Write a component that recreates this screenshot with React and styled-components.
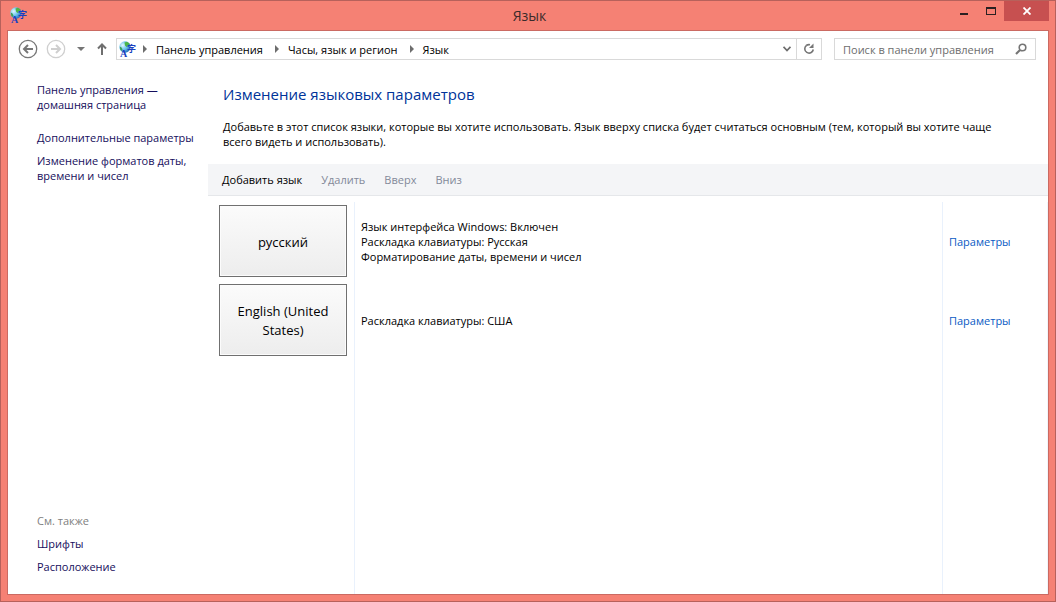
import React from "react";
import styled, { createGlobalStyle } from "styled-components";

const GlobalStyle = createGlobalStyle`
  *, *::before, *::after { box-sizing: border-box; }
  body {
    margin: 0;
    font-family: "Open Sans", "Noto Sans", sans-serif;
    font-size: 11px;
    line-height: 15px;
    color: #000;
  }
  h1, h2, p, ul, ol { margin: 0; padding: 0; font-weight: 400; }
  ul, ol { list-style: none; }
  button, input { font: inherit; }
  button { border: 0; padding: 0; background: none; color: inherit; }
  a { text-decoration: none; }
  svg { display: block; flex: none; }
`;

const Window = styled.div`
  min-height: 100vh;
  display: flex;
  flex-direction: column;
  background: #f58174;
  border: 1px solid #b7615b;
  padding: 0 6px 6px;
`;

const TitleBar = styled.header`
  height: 29px;
  display: grid;
  grid-template-columns: 1fr auto 1fr;
  padding-left: 3px;
`;

const TitleIcon = styled.div`
  padding-top: 6px;
`;

const Title = styled.h1`
  font-size: 14px;
  line-height: 30px;
  color: #3a2b2b;
`;

const Controls = styled.div`
  display: flex;
  justify-content: flex-end;
  align-items: flex-start;
`;

const ControlButton = styled.button`
  width: ${(p) => (p.$close ? 45 : 27)}px;
  height: 20px;
  display: flex;
  align-items: center;
  justify-content: center;
  background: ${(p) => (p.$close ? "#c75050" : "transparent")};
`;

const Client = styled.div`
  flex: 1;
  display: flex;
  flex-direction: column;
  background: #fff;
  border: 1px solid #cb6a62;
`;

const NavBar = styled.nav`
  display: flex;
  align-items: center;
  padding: 7px 12px 0 9px;
`;

const NavButton = styled.button`
  width: ${(p) => p.$width}px;
  height: 22px;
  display: flex;
  align-items: center;
  justify-content: center;
`;

const AddressBar = styled.div`
  flex: 1;
  height: 22px;
  display: flex;
  align-items: center;
  border: 1px solid #d9d9d9;
  padding-left: 2px;
  margin-right: 12px;
`;

const Crumbs = styled.ol`
  flex: 1;
  display: flex;
  align-items: center;
`;

const Crumb = styled.li`
  display: flex;
  align-items: center;
  gap: 9px;
  padding-left: 12px;
  &:first-child { padding-left: 6px; }
`;

const CrumbLink = styled.a`
  color: #000;
  white-space: nowrap;
`;

const RefreshButton = styled.button`
  width: 25px;
  height: 20px;
  display: flex;
  align-items: center;
  justify-content: center;
  border-left: 1px solid #d9d9d9;
`;

const SearchBox = styled.form`
  width: 202px;
  height: 22px;
  display: flex;
  align-items: center;
  border: 1px solid #d9d9d9;
  padding: 0 8px;
`;

const SearchInput = styled.input`
  flex: 1;
  min-width: 0;
  border: 0;
  outline: 0;
  padding: 0;
  background: transparent;
  &::placeholder { color: #6d6d6d; opacity: 1; }
`;

const Content = styled.div`
  flex: 1;
  display: flex;
`;

const Sidebar = styled.aside`
  width: 200px;
  flex: none;
  display: flex;
  flex-direction: column;
  justify-content: space-between;
  padding: 22px 4px 20px 29px;
`;

const SideGroup = styled.div`
  display: flex;
  flex-direction: column;
  align-items: flex-start;
  gap: 8px;
`;

const SideLink = styled.a`
  color: #150e5c;
  margin-bottom: ${(p) => (p.$home ? 10 : 0)}px;
`;

const SideCaption = styled.h2`
  font-size: 11px;
  line-height: 15px;
  color: #808080;
`;

const Main = styled.main`
  flex: 1;
  min-width: 0;
  display: flex;
  flex-direction: column;
`;

const Intro = styled.section`
  padding: 23px 40px 15px 15px;
`;

const Heading = styled.h2`
  font-size: 15px;
  line-height: 22px;
  color: #003399;
  margin-bottom: 14px;
`;

const Toolbar = styled.div`
  height: 32px;
  display: flex;
  align-items: center;
  gap: 19px;
  padding-left: 14px;
  background: #f4f5f7;
  border-bottom: 1px solid #e5e7ea;
`;

const ToolButton = styled.button`
  &:disabled { color: #838999; }
`;

const LanguageList = styled.ul`
  flex: 1;
  display: flex;
  flex-direction: column;
  margin-top: 6px;
  border-right: 1px solid #f0f4fa;
`;

const LanguageRow = styled.li`
  display: grid;
  grid-template-columns: 146px 1fr 105px;
  min-height: ${(p) => (p.$rest ? 0 : 79)}px;
  flex: ${(p) => (p.$rest ? "1" : "none")};
`;

const TileCell = styled.div`
  padding: 3px 7px 4px 11px;
`;

const Cell = styled.div`
  display: flex;
  flex-direction: column;
  justify-content: center;
  padding-left: 6px;
  border-left: 1px solid #e9f1fc;
`;

const LanguageTile = styled.button`
  width: 128px;
  height: 72px;
  padding: 2px 10px 0;
  font-size: 13px;
  line-height: 19px;
  border: 1px solid #707070;
  background: linear-gradient(#fbfbfb, #ededed);
  box-shadow: inset 0 0 0 1px #fcfcfc;
`;

const OptionsLink = styled.a`
  color: #0a5bc4;
`;

const IconGlyph = styled.text`
  font-family: ${(p) => (p.$cjk ? '"Noto Sans CJK SC"' : '"Liberation Serif"')}, sans-serif;
  font-size: ${(p) => (p.$cjk ? 9 : 10)}px;
  font-weight: 700;
  fill: #1a3fc0;
`;

function LanguageIcon() {
  return (
    <svg width="18" height="17" viewBox="0 0 18 17" aria-hidden="true">
      <defs>
        <radialGradient id="ocean" cx="0.3" cy="0.35" r="0.75">
          <stop offset="0" stopColor="#e2f8ff" />
          <stop offset="0.5" stopColor="#6cc4ee" />
          <stop offset="1" stopColor="#1e64b4" />
        </radialGradient>
      </defs>
      <circle cx="6" cy="6" r="5.700" fill="url(#ocean)" />
      <path d="M5.500 1.500 8 .8l2.500 1.800L9.500 5 7.500 6 6 4.500z" fill="#4cb648" />
      <path d="M.8 5.500 2.500 6.500 3.500 8.500 2.500 10 1.200 8.500z" fill="#3c9f58" />
      <IconGlyph $cjk x="8" y="11">字</IconGlyph>
      <IconGlyph x="1" y="16">A</IconGlyph>
    </svg>
  );
}

function RoundArrow({ color, flip }) {
  return (
    <svg width="20" height="20" viewBox="0 0 20 20" fill="none" stroke={color} aria-hidden="true">
      <circle cx="10" cy="10" r="8.700" strokeWidth="1.300" />
      <path
        d={flip ? "M5 10h9M10 6l4 4-4 4" : "M15 10H6M10 6l-4 4 4 4"}
        strokeWidth="2"
      />
    </svg>
  );
}

function CrumbArrow() {
  return (
    <svg width="4" height="8" viewBox="0 0 4 8" aria-hidden="true">
      <path d="M0 0l4 4-4 4z" fill="#6d6d6d" />
    </svg>
  );
}

const crumbs = ["Панель управления", "Часы, язык и регион", "Язык"];

const tools = [
  { label: "Добавить язык", enabled: true },
  { label: "Удалить" },
  { label: "Вверх" },
  { label: "Вниз" },
];

const languages = [
  {
    name: "русский",
    details: [
      "Язык интерфейса Windows: Включен",
      "Раскладка клавиатуры: Русская",
      "Форматирование даты, времени и чисел",
    ],
  },
  { name: "English (United States)", details: ["Раскладка клавиатуры: США"] },
];

export default function App() {
  return (
    <>
      <GlobalStyle />
      <Window>
        <TitleBar>
          <TitleIcon><LanguageIcon /></TitleIcon>
          <Title>Язык</Title>
          <Controls>
            <ControlButton aria-label="Свернуть">
              <svg width="8" height="20" viewBox="0 0 8 20"><path d="M0 12h8v2H0z" fill="#2a2022" /></svg>
            </ControlButton>
            <ControlButton aria-label="Развернуть">
              <svg width="10" height="20" viewBox="0 0 10 20"><path d="M0 6h10v8H0zM1 8v5h8V8z" fillRule="evenodd" fill="#2a2022" /></svg>
            </ControlButton>
            <ControlButton $close aria-label="Закрыть">
              <svg width="8" height="8" viewBox="0 0 8 8"><path d="M.5.5l7 7M7.500.5l-7 7" stroke="#fff" strokeWidth="1.800" /></svg>
            </ControlButton>
          </Controls>
        </TitleBar>
        <Client>
          <NavBar>
            <NavButton $width={21} aria-label="Назад"><RoundArrow color="#777" /></NavButton>
            <NavButton $width={36} aria-label="Вперед"><RoundArrow color="#cfcfcf" flip /></NavButton>
            <NavButton $width={14} aria-label="Последние расположения">
              <svg width="8" height="4" viewBox="0 0 8 4"><path d="M0 0h8L4 4z" fill="#757575" /></svg>
            </NavButton>
            <NavButton $width={28} aria-label="Вверх на один уровень">
              <svg width="10" height="12" viewBox="0 0 10 12" fill="none" stroke="#6f6f6f" strokeWidth="2">
                <path d="M5 12V1.500M1 5.500l4-4 4 4" />
              </svg>
            </NavButton>
            <AddressBar>
              <LanguageIcon />
              <Crumbs>
                {crumbs.map((c) => (
                  <Crumb key={c}><CrumbArrow /><CrumbLink href="#">{c}</CrumbLink></Crumb>
                ))}
              </Crumbs>
              <NavButton $width={19} aria-label="Предыдущие расположения">
                <svg width="8" height="6" viewBox="0 0 8 6"><path d="M.5.8 4 4.500 7.500.8" fill="none" stroke="#6d6d6d" strokeWidth="1.800" /></svg>
              </NavButton>
              <RefreshButton aria-label="Обновить">
                <svg width="12" height="12" viewBox="0 0 12 12">
                  <path d="M3.500 2.300A4.300 4.300 0 1 0 10.300 6.500" fill="none" stroke="#757575" strokeWidth="1.600" />
                  <path d="M3.200 2.500Q5 1.300 7 1.700" fill="none" stroke="#757575" strokeWidth="1.600" />
                  <path d="M6 5h4.500V.5z" fill="#757575" />
                </svg>
              </RefreshButton>
            </AddressBar>
            <SearchBox role="search">
              <SearchInput aria-label="Поиск в панели управления" placeholder="Поиск в панели управления" />
              <svg width="12" height="12" viewBox="0 0 12 12" fill="none" stroke="#757575" aria-hidden="true">
                <circle cx="7.500" cy="4.500" r="3.300" strokeWidth="1.600" />
                <path d="M5 7 1 11" strokeWidth="2.200" />
              </svg>
            </SearchBox>
          </NavBar>
          <Content>
            <Sidebar>
              <SideGroup>
                <SideLink href="#" $home>Панель управления —<br />домашняя страница</SideLink>
                <SideLink href="#">Дополнительные параметры</SideLink>
                <SideLink href="#">Изменение форматов даты, времени и чисел</SideLink>
              </SideGroup>
              <SideGroup>
                <SideCaption>См. также</SideCaption>
                <SideLink href="#">Шрифты</SideLink>
                <SideLink href="#">Расположение</SideLink>
              </SideGroup>
            </Sidebar>
            <Main>
              <Intro>
                <Heading>Изменение языковых параметров</Heading>
                <p>
                  Добавьте в этот список языки, которые вы хотите использовать. Язык вверху списка
                  будет считаться основным (тем, который вы хотите чаще всего видеть и использовать).
                </p>
              </Intro>
              <Toolbar role="toolbar">
                {tools.map((t) => (
                  <ToolButton key={t.label} disabled={!t.enabled}>{t.label}</ToolButton>
                ))}
              </Toolbar>
              <LanguageList>
                {languages.map((l) => (
                  <LanguageRow key={l.name}>
                    <TileCell><LanguageTile>{l.name}</LanguageTile></TileCell>
                    <Cell>{l.details.map((d) => <p key={d}>{d}</p>)}</Cell>
                    <Cell><OptionsLink href="#">Параметры</OptionsLink></Cell>
                  </LanguageRow>
                ))}
                <LanguageRow $rest aria-hidden="true"><div /><Cell /><Cell /></LanguageRow>
              </LanguageList>
            </Main>
          </Content>
        </Client>
      </Window>
    </>
  );
}
